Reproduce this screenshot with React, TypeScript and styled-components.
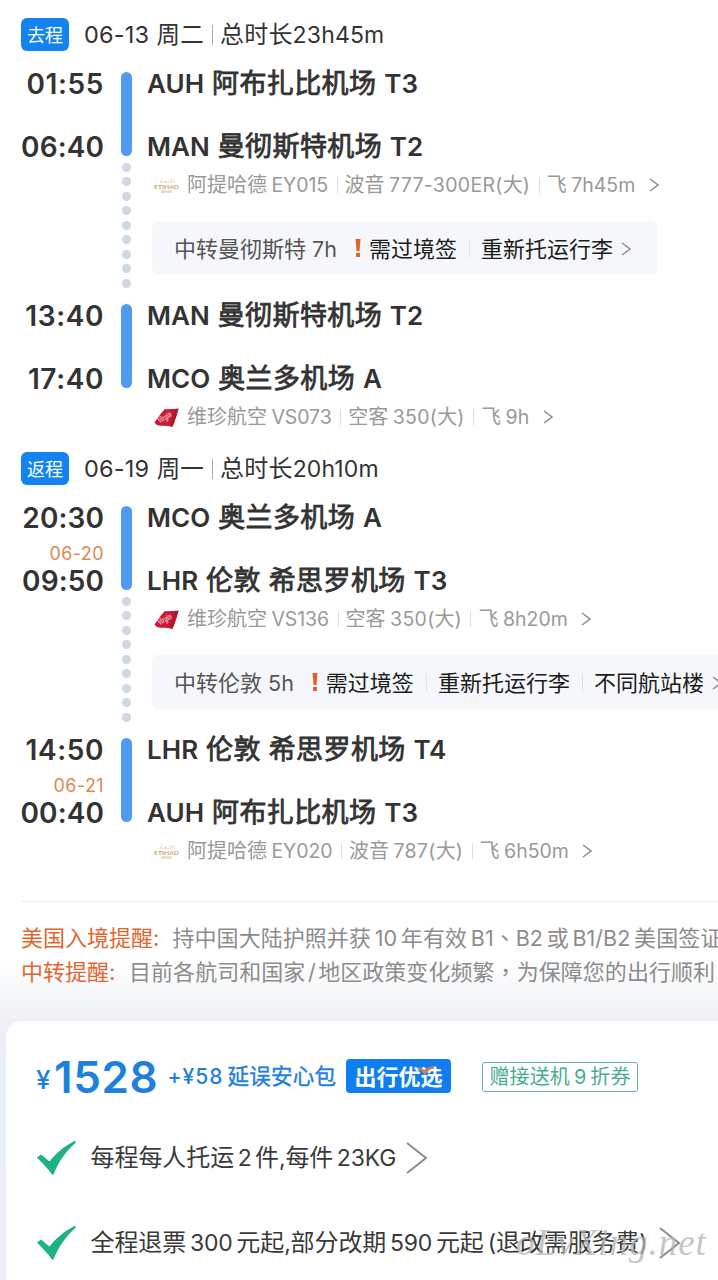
import React from "react";
import styled, { createGlobalStyle } from "styled-components";

const Global = createGlobalStyle`
  * { box-sizing: border-box; }
  body {
    margin: 0;
    background: #fff;
    overflow: hidden;
    font-family: Inter, "Noto Sans CJK SC", sans-serif;
    color: #333;
  }
`;

/* Text that mixes Latin and Han runs, each with its own tracking */
const Line = styled.span<{ $size: number; $weight?: number; $color?: string; $line?: number; $space?: number }>`
  display: inline-block;
  white-space: pre;
  font-size: ${(p) => p.$size}px;
  font-weight: ${(p) => p.$weight ?? 400};
  line-height: ${(p) => p.$line ?? 24}px;
  word-spacing: ${(p) => p.$space ?? 0}px;
  color: ${(p) => p.$color ?? "inherit"};
`;
const Han = styled.span<{ $size: number; $track: number; $stroke: number; $bold: boolean }>`
  font-family: "Noto Sans CJK SC", sans-serif;
  font-size: ${(p) => p.$size}px;
  font-weight: ${(p) => (p.$bold ? 700 : 400)};
  letter-spacing: ${(p) => p.$track}px;
  line-height: 0;
  -webkit-text-stroke: ${(p) => p.$stroke}px currentColor;
`;
const Punct = styled(Han)`
  font-family: "Noto Sans CJK TC", sans-serif;
`;
const Latin = styled.span<{ $before: number; $after: number; $track: number }>`
  margin-left: ${(p) => p.$before}px;
  margin-right: ${(p) => p.$after}px;
  letter-spacing: ${(p) => p.$track}px;
`;

type MixProps = {
  text: string;
  size: number;
  han: number;
  pitch: number;
  gap?: number;
  track?: number;
  weight?: number;
  color?: string;
  stroke?: number;
  line?: number;
  space?: number;
};

const isHan = (s?: string) => !!s && /[\u4e00-\u9fff]/.test(s);
const isPunct = (s?: string) => !!s && /[、，]/.test(s);

function Mix({ text, size, han, pitch, gap = 0, track = 0, weight, color, stroke = 0, line, space }: MixProps) {
  const runs = text.match(/[\u4e00-\u9fff]+|[、，]|[^\u4e00-\u9fff、，]+/g) ?? [];
  return (
    <Line $size={size} $weight={weight} $color={color} $line={line} $space={space}>
      {runs.map((run, i) => {
        if (isPunct(run) || isHan(run)) {
          const Run = isPunct(run) ? Punct : Han;
          return (
            <Run key={i} $size={han} $track={pitch - han} $stroke={stroke} $bold={weight === 700}>
              {run}
            </Run>
          );
        }
        return (
          <Latin
            key={i}
            $before={isHan(runs[i - 1]) && /^[A-Z0-9/]/.test(run) ? gap : 0}
            $after={isHan(runs[i + 1]) && /[A-Z0-9/]$/.test(run) ? gap : 0}
            $track={track}
          >
            {run}
          </Latin>
        );
      })}
    </Line>
  );
}

const Page = styled.main`
  width: 718px;
  height: 1280px;
  overflow: hidden;
  background: linear-gradient(#fff 0, #fff 955px, #eff1f5 1021px, #e9edf5 1060px, #ebeef5 100%);
`;
const Journey = styled.section`
  height: 434px;
  padding: 18px 0 0 21px;
`;
const JourneyHead = styled.header`
  display: flex;
  align-items: center;
  height: 33px;
  margin-bottom: 21px;
`;
const Direction = styled.span`
  display: flex;
  align-items: center;
  justify-content: center;
  width: 48px;
  height: 33px;
  margin-right: 15px;
  padding-top: 2px;
  border-radius: 6px;
  background: #1283f0;
  color: #fff;
`;
const Bar = styled.i<{ $h: number; $before: number; $after: number; $color?: string }>`
  flex: none;
  width: 1px;
  height: ${(p) => p.$h}px;
  margin: 0 ${(p) => p.$after}px 0 ${(p) => p.$before}px;
  background: ${(p) => p.$color ?? "#ddd"};
`;
const Segment = styled.div<{ $height: number }>`
  display: grid;
  grid-template-columns: 83px 11px 1fr;
  column-gap: 17px;
  height: ${(p) => p.$height}px;
`;
const Times = styled.div`
  display: flex;
  flex-direction: column;
  justify-content: space-between;
  align-items: flex-end;
  height: 86px;
  padding-top: 1px;
`;
const Time = styled.time<{ $track: number }>`
  font-size: 28px;
  font-weight: 600;
  line-height: 22px;
  letter-spacing: ${(p) => p.$track}px;
  white-space: nowrap;
`;
const Arrival = styled.div`
  display: flex;
  flex-direction: column;
  align-items: flex-end;
`;
const NextDay = styled.span`
  font-size: 18px;
  line-height: 17px;
  letter-spacing: 0.4px;
  color: #dc8a50;
  margin-bottom: 8px;
`;
const Rail = styled.div`
  display: flex;
  flex-direction: column;
  align-items: center;
`;
const Flown = styled.div`
  width: 11px;
  height: 84px;
  border-radius: 6px;
  background: #519af2;
`;
const Dots = styled.div`
  display: flex;
  flex-direction: column;
  gap: 5.5px;
  padding-top: 6.5px;
`;
const Dot = styled.i`
  width: 9px;
  height: 9px;
  border-radius: 50%;
  background: #d0d7e4;
`;
const Body = styled.div`
  display: flex;
  flex-direction: column;
  margin-left: -2px;
  min-width: 0;
`;
const Stations = styled.div`
  display: flex;
  flex-direction: column;
  justify-content: space-between;
  height: 86px;
  padding-top: 1px;
`;
const Flight = styled.div`
  display: flex;
  align-items: center;
  height: 24px;
  margin: 15px 0 0 7px;
`;
const Logo = styled.svg`
  flex: none;
  width: 25px;
  height: 20px;
  margin-right: 8px;
`;
const Transfer = styled.div<{ $width: number }>`
  display: flex;
  align-items: center;
  flex: none;
  width: ${(p) => p.$width}px;
  height: 54px;
  margin: 24px 0 0 5px;
  padding: 2px 0 0 22px;
  border-radius: 6px;
  background: #f6f7fa;
`;
const Alert = styled.svg`
  flex: none;
  width: 6px;
  height: 18px;
  margin: 0 8px 3px 18px;
`;
const Chevron = styled.svg<{ $gap: number }>`
  flex: none;
  margin-left: ${(p) => p.$gap}px;
`;

function Arrow({ w, h, gap, stroke = 1.5 }: { w: number; h: number; gap: number; stroke?: number }) {
  return (
    <Chevron $gap={gap} width={w} height={h} viewBox={`0 0 ${w} ${h}`} fill="none" stroke="#8c8c8c" strokeWidth={stroke}>
      <path d={`M1 1L${w - 1} ${h / 2}L1 ${h - 1}`} />
    </Chevron>
  );
}

function EtihadLogo() {
  return (
    <Logo viewBox="0 0 25 20" fill="#c6aa6a" fontFamily="Lato, sans-serif">
      <text x="4.5" y="7.5" fontSize="4.5" textLength="16" opacity=".85">الاتحاد</text>
      <text x="0" y="13.5" fontSize="6.3" fontWeight="700" textLength="25" lengthAdjust="spacingAndGlyphs">ETIHAD</text>
      <text x="7" y="17.5" fontSize="3" textLength="11" opacity=".85">AIRWAYS</text>
    </Logo>
  );
}

function VirginLogo() {
  return (
    <Logo viewBox="0 0 25 20">
      <path d="M.5 15.5C3 12 7 6 10.5 2.3L24.5 1.8C23 7 21 14 18.5 19.7C15 18.8 11 18.5 7 18.8C4 18.8 1.5 17.5 .5 15.5Z" fill="#cb1a34" />
      <path d="M20 2L24.5 1.8C23 7 21 14 18.5 19.7L15.500 19Z" fill="#b01730" />
      <text x="5.5" y="16.5" fontSize="9" fontStyle="italic" fontFamily="Liberation Serif, serif" fill="#fff" transform="rotate(-30 5.5 16.5)" textLength="15" lengthAdjust="spacingAndGlyphs">Virgin</text>
    </Logo>
  );
}

function Station({ text }: { text: string }) {
  return <Mix text={text} size={26} han={27} pitch={27.4} weight={600} stroke={0.8} track={0.1} line={22} space={1.1} />;
}

function Clock({ value }: { value: string }) {
  return <Time $track={value.includes("1") ? 0.6 : 0.1}>{value}</Time>;
}

type SegmentData = {
  from: [string, string];
  to: [string, string];
  nextDay?: string;
  airline: "etihad" | "virgin";
  flight: [string, string, string];
  transfer?: { at: string; notes: string[]; width: number };
};

const flightTrack = [-0.1, 0.3, 0];

function SegmentView({ data, height }: { data: SegmentData; height: number }) {
  return (
    <Segment $height={height}>
      <Times>
        <Clock value={data.from[0]} />
        <Arrival>
          {data.nextDay && <NextDay>{data.nextDay}</NextDay>}
          <Clock value={data.to[0]} />
        </Arrival>
      </Times>
      <Rail>
        <Flown />
        {data.transfer && <Dots>{Array.from({ length: 9 }, (_, i) => <Dot key={i} />)}</Dots>}
      </Rail>
      <Body>
        <Stations>
          <Station text={data.from[1]} />
          <Station text={data.to[1]} />
        </Stations>
        <Flight>
          {data.airline === "etihad" ? <EtihadLogo /> : <VirginLogo />}
          {data.flight.map((part, i) => (
            <React.Fragment key={i}>
              {i > 0 && <Bar $h={16} $before={8.5} $after={7} />}
              <Mix text={part} size={19.5} han={20} pitch={20} gap={4.5} track={flightTrack[i]} color="#999" />
            </React.Fragment>
          ))}
          <Arrow w={10} h={14} gap={13.5} />
        </Flight>
        {data.transfer && (
          <Transfer $width={data.transfer.width}>
            <Mix text={data.transfer.at} size={21.5} han={22} pitch={22} color="#555" />
            <Alert viewBox="0 0 6 18" fill="#e4602a">
              <path d="M.5 0H5.5L4.5 12H1.5Z" />
              <rect x="1" y="14" width="4" height="4" />
            </Alert>
            {data.transfer.notes.map((note, i) => (
              <React.Fragment key={note}>
                {i > 0 && <Bar $h={18} $before={12} $after={11} $color="#e2e3e6" />}
                <Mix text={note} size={22} han={22} pitch={22} color="#1c1c1c" />
              </React.Fragment>
            ))}
            <Arrow w={10} h={14} gap={8.5} />
          </Transfer>
        )}
      </Body>
    </Segment>
  );
}

function JourneyView({ tag, date, total, segments }: { tag: string; date: string; total: string; segments: SegmentData[] }) {
  return (
    <Journey>
      <JourneyHead>
        <Direction>
          <Mix text={tag} size={18} han={18} pitch={18} />
        </Direction>
        <Mix text={date} size={23.5} han={23.5} pitch={23.7} track={0.2} space={0.5} />
        <Bar $h={20} $before={8} $after={7} $color="#aaa" />
        <Mix text={total} size={23} han={24} pitch={24.2} track={0.15} />
      </JourneyHead>
      <SegmentView data={segments[0]} height={232} />
      <SegmentView data={segments[1]} height={120} />
    </Journey>
  );
}

const Rule = styled.hr`
  height: 1px;
  margin: 33px 0 0 21px;
  border: 0;
  background: #efeff1;
`;
const Notices = styled.section`
  display: flex;
  flex-direction: column;
  height: 119px;
  margin-left: 21px;
  padding-top: 19px;
`;
const Notice = styled.p`
  display: flex;
  align-items: center;
  height: 34px;
  margin: 0;
  white-space: nowrap;
`;
const Lead = styled.span<{ $width: number }>`
  flex: none;
  width: ${(p) => p.$width}px;
`;
const Fare = styled.section`
  width: 712px;
  height: 260px;
  margin-left: 6px;
  padding: 35px 0 0 30px;
  border-radius: 16px 0 0 0;
  background: #fff;
  white-space: nowrap;
`;
const PriceRow = styled.div`
  display: flex;
  align-items: center;
  height: 42px;
  color: #1f80dc;
`;
const Yen = styled.span`
  width: 18px;
  padding-top: 5px;
  font-size: 26px;
  font-weight: 500;
  line-height: 30px;
`;
const Amount = styled.strong`
  width: 113.5px;
  font-size: 44px;
  font-weight: 600;
  line-height: 42px;
  letter-spacing: 0.6px;
`;
const AddOn = styled.span`
  width: 178.5px;
`;
const Pick = styled.span`
  position: relative;
  display: flex;
  align-items: center;
  justify-content: center;
  width: 105px;
  height: 34px;
  margin-bottom: 2px;
  padding-top: 1px;
  border-radius: 4px;
  background: #0f7ef0;
`;
const Swoosh = styled.svg`
  position: absolute;
  left: 68px;
  top: 5px;
`;
const Coupon = styled.span`
  display: flex;
  align-items: center;
  justify-content: center;
  width: 156px;
  height: 30px;
  margin-left: 31px;
  border: 1px solid #5fb89a;
  border-radius: 3px;
`;
const Feature = styled.div`
  position: relative;
  display: flex;
  align-items: center;
  height: 34px;
  margin-top: 43px;
  & + & { margin-top: 51px; }
`;
const Tick = styled.svg`
  flex: none;
  margin-right: 14.5px;
`;
const Watermark = styled.span`
  position: absolute;
  left: 480px;
  top: -5px;
  font: italic 37px/44px "Liberation Serif", serif;
  letter-spacing: 1px;
  color: rgba(178, 178, 178, 0.75);
`;

function TickMark() {
  return (
    <Tick width="40" height="35" viewBox="0 0 40 35" fill="#1db37e">
      <path d="M1 16.5L5 13.500L13.5 20.5C20 12.5 28 5 39.5 -.5V2C30 10 23 20 17.500 33.500H16C12 28 7 22.5 1 16.5Z" />
    </Tick>
  );
}

const outbound: SegmentData[] = [
  {
    from: ["01:55", "AUH 阿布扎比机场 T3"],
    to: ["06:40", "MAN 曼彻斯特机场 T2"],
    airline: "etihad",
    flight: ["阿提哈德EY015", "波音777-300ER(大)", "飞7h45m"],
    transfer: { at: "中转曼彻斯特 7h", notes: ["需过境签", "重新托运行李"], width: 505 },
  },
  {
    from: ["13:40", "MAN 曼彻斯特机场 T2"],
    to: ["17:40", "MCO 奥兰多机场 A"],
    airline: "virgin",
    flight: ["维珍航空VS073", "空客350(大)", "飞9h"],
  },
];
const inbound: SegmentData[] = [
  {
    from: ["20:30", "MCO 奥兰多机场 A"],
    to: ["09:50", "LHR 伦敦 希思罗机场 T3"],
    nextDay: "06-20",
    airline: "virgin",
    flight: ["维珍航空VS136", "空客350(大)", "飞8h20m"],
    transfer: { at: "中转伦敦 5h", notes: ["需过境签", "重新托运行李", "不同航站楼"], width: 590 },
  },
  {
    from: ["14:50", "LHR 伦敦 希思罗机场 T4"],
    to: ["00:40", "AUH 阿布扎比机场 T3"],
    nextDay: "06-21",
    airline: "etihad",
    flight: ["阿提哈德EY020", "波音787(大)", "飞6h50m"],
  },
];

export default function App() {
  return (
    <>
      <Global />
      <Page>
        <JourneyView tag="去程" date="06-13 周二" total="总时长23h45m" segments={outbound} />
        <JourneyView tag="返程" date="06-19 周一" total="总时长20h10m" segments={inbound} />
        <Rule />
        <Notices>
          <Notice>
            <Lead $width={151.5}><Mix text="美国入境提醒:" size={22} han={22} pitch={22} color="#e0662e" /></Lead>
            <Mix text="持中国大陆护照并获10年有效B1、B2或B1/B2美国签证" size={21.5} han={22} pitch={22.05} gap={3.8} color="#8c8c8c" />
          </Notice>
          <Notice>
            <Lead $width={108}><Mix text="中转提醒:" size={22} han={22} pitch={22} color="#e0662e" /></Lead>
            <Mix text="目前各航司和国家/地区政策变化频繁，为保障您的出行顺利" size={21.5} han={22} pitch={22.05} gap={2.5} color="#8c8c8c" />
          </Notice>
        </Notices>
        <Fare>
          <PriceRow>
            <Yen>¥</Yen>
            <Amount>1528</Amount>
            <AddOn><Mix text="+¥58延误安心包" size={21} han={21.5} pitch={21.8} gap={4} track={1} weight={500} stroke={0.4} /></AddOn>
            <Pick>
              <Mix text="出行优选" size={22} han={22} pitch={22} weight={700} color="#fff" />
              <Swoosh width="24" height="12" viewBox="0 0 24 12" fill="#c9815f">
                <path d="M1 3C5 2.5 8 3.5 10 6C13 3 18 2 23 2C18 4 14 7 10.5 11C8 7 5 4.5 1 3Z" />
              </Swoosh>
            </Pick>
            <Coupon><Mix text="赠接送机9折券" size={20} han={20} pitch={20.1} gap={4} color="#48ae8b" /></Coupon>
          </PriceRow>
          <Feature>
            <TickMark />
            <Mix text="每程每人托运2件,每件23KG" size={23} han={24} pitch={23.95} gap={3.5} track={-0.2} color="#3a3a3a" />
            <Arrow w={21} h={32} gap={10} stroke={2} />
          </Feature>
          <Feature>
            <TickMark />
            <Mix text="全程退票300元起,部分改期590元起 (退改需服务费)" size={23} han={24} pitch={23.9} gap={3.8} track={-0.2} space={-2.3} color="#3a3a3a" />
            <Arrow w={21} h={32} gap={11} stroke={2} />
            <Watermark>oLvXing.net</Watermark>
          </Feature>
        </Fare>
      </Page>
    </>
  );
}
